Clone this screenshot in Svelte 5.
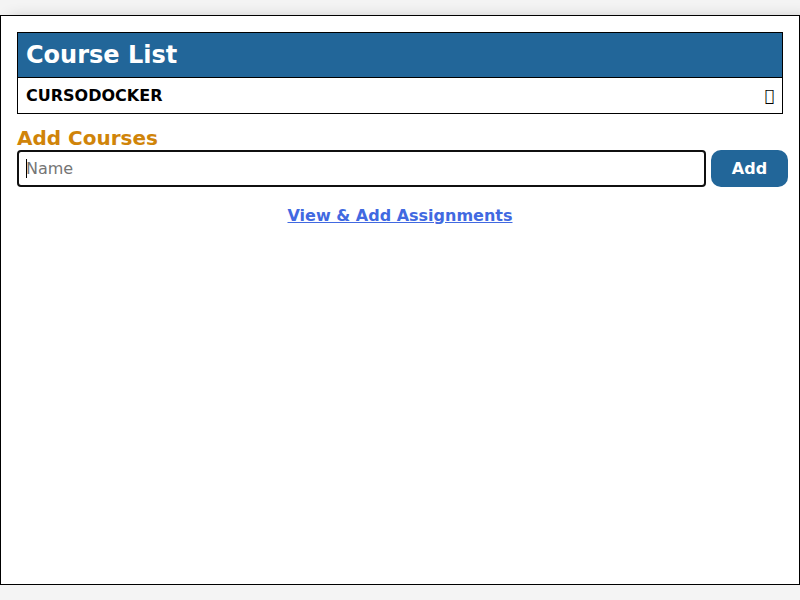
<script>
  let name = $state('');
  const courses = ['CURSODOCKER'];
</script>

<main>
  <section class="list">
    <h1>Course List</h1>
    {#each courses as course}
      <div class="row">
        <span>{course}</span>
        <i class="trash">&#xf1f8;</i>
      </div>
    {/each}
  </section>

  <h2>Add Courses</h2>
  <form onsubmit={(e) => e.preventDefault()}>
    <div class="field">
      <input type="text" placeholder="Name" bind:value={name} />
      <span class="caret"></span>
    </div>
    <button type="submit">Add</button>
  </form>

  <a href="#assignments">View &amp; Add Assignments</a>
</main>

<style>
  :global(body) {
    margin: 0;
    background: #f4f4f4;
    overflow: hidden;
  }
  main {
    box-sizing: border-box;
    display: flex;
    flex-direction: column;
    width: 800px;
    height: 570px;
    margin-top: 15px;
    padding: 16px;
    border: 1px solid #000;
    background: #fff;
    box-shadow: 10px 5px 15px rgba(0, 0, 0, 0.3);
    font-family: 'DejaVu Sans', sans-serif;
    font-size: 16px;
    color: #000;
  }
  .list {
    border: 1px solid #000;
  }
  h1 {
    margin: 0;
    padding: 8px;
    height: 28px;
    line-height: 28px;
    font-size: 24px;
    color: #fff;
    background: #226699;
    border-bottom: 1px solid #000;
  }
  .row {
    display: flex;
    align-items: center;
    justify-content: space-between;
    height: 19px;
    padding: 8px;
    line-height: 19px;
    font-weight: bold;
  }
  .trash {
    font-style: normal;
    font-weight: normal;
  }
  h2 {
    margin: 12px 0 0;
    height: 24px;
    line-height: 24px;
    font-size: 20px;
    color: #d08409;
  }
  form {
    display: flex;
    gap: 5px;
    margin-right: -5px;
  }
  .field {
    position: relative;
    flex: 1;
  }
  input {
    display: block;
    box-sizing: border-box;
    width: 100%;
    height: 37px;
    padding: 0 7px;
    border: 2px solid #101010;
    border-radius: 4px;
    outline: none;
    background: #fff;
    font: inherit;
  }
  input::placeholder {
    color: #757575;
  }
  .caret {
    position: absolute;
    left: 9px;
    top: 9px;
    width: 1px;
    height: 19px;
    background: #000;
  }
  button {
    width: 77px;
    height: 37px;
    padding: 0;
    border: 0;
    border-radius: 10px;
    background: #226699;
    color: #fff;
    font: inherit;
    font-weight: bold;
  }
  a {
    align-self: center;
    margin-top: 19px;
    line-height: 19px;
    font-weight: bold;
    color: #4169e1;
  }
</style>
